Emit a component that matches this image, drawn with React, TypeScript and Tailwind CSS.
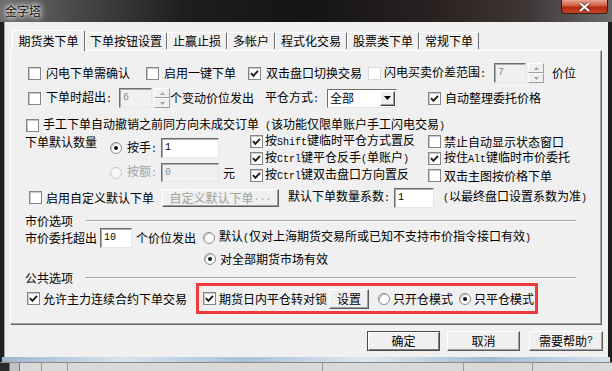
import React from 'react';

// half-width ascii, roughly the width of the SimSun bitmap glyphs (6px)
const A = ({ children }: { children: React.ReactNode }) => (
  <span className="[font-family:'Liberation_Mono',monospace] text-[10px]">{children}</span>
);

const Check = ({ on, faint }: { on?: boolean; faint?: boolean }) => (
  <span
    className={`w-[13px] h-[13px] shrink-0 bg-white flex items-center justify-center border ${
      faint ? 'border-[#dadada]' : 'border-[#858585] shadow-[inset_1px_1px_0_#c9c9c9]'
    }`}
  >
    {on && (
      <svg width="9" height="9" viewBox="0 0 9 9">
        <path d="M1 4.2 L3.4 6.8 L8 1.8" stroke="#1a1a1a" strokeWidth="1.9" fill="none" />
      </svg>
    )}
  </span>
);

const Radio = ({ on, disabled }: { on?: boolean; disabled?: boolean }) => (
  <span
    className={`w-[12px] h-[12px] shrink-0 rounded-full flex items-center justify-center border ${
      disabled ? 'border-[#c9c9c9] bg-[#f7f7f7]' : 'border-[#8a8a8a] bg-white shadow-[inset_1px_1px_1px_#c4c4c4]'
    }`}
  >
    {on && <span className="w-[4px] h-[4px] rounded-full bg-[#111]" />}
  </span>
);

const Box = ({ cls, value, disabled }: { cls: string; value: string; disabled?: boolean }) => (
  <div
    className={`${cls} shrink-0 flex items-center pl-[3px] border border-t-[#6d6d6d] border-l-[#6d6d6d] border-r-[#e6e6e6] border-b-[#e6e6e6] shadow-[inset_1px_1px_0_#ababab] ${
      disabled ? 'bg-[#f0f0f0] text-[#8c8c8c]' : 'bg-white text-black'
    }`}
  >
    <A>{value}</A>
  </div>
);

const Arrow = ({ down }: { down?: boolean }) => (
  <svg width="5" height="3" viewBox="0 0 5 3">
    <path d={down ? 'M0 0H5L2.5 3Z' : 'M2.5 0L5 3H0Z'} fill="#a3a3a3" />
  </svg>
);

const Spin = () => (
  <div className="w-[16px] h-[20px] shrink-0 flex flex-col">
    <div className="h-[10px] flex items-center justify-center bg-[#f0f0f0] border border-t-white border-l-white border-r-[#9d9d9d] border-b-[#9d9d9d]">
      <Arrow />
    </div>
    <div className="h-[10px] flex items-center justify-center bg-[#f0f0f0] border border-t-white border-l-white border-r-[#9d9d9d] border-b-[#9d9d9d]">
      <Arrow down />
    </div>
  </div>
);

const Btn = ({ cls, children, dflt, disabled }: { cls: string; children: React.ReactNode; dflt?: boolean; disabled?: boolean }) => (
  <div
    className={`${cls} shrink-0 flex items-center justify-center bg-[#f0f0f0] border ${
      dflt
        ? 'border-[#4a4a4a] shadow-[inset_1px_1px_0_#fff,inset_-1px_-1px_0_#7a7a7a,inset_0_0_0_1px_#6a6a6a]'
        : 'border-t-white border-l-white border-r-[#5a5a5a] border-b-[#5a5a5a] shadow-[inset_-1px_-1px_0_#a0a0a0]'
    } ${disabled ? 'text-[#a0a0a0]' : 'text-black'}`}
  >
    {children}
  </div>
);

const Group = ({ label }: { label: string }) => (
  <div className="flex items-center h-[12px] leading-[12px]">
    <span className="w-[61px]">{label}</span>
    <div className="w-[490px] h-[2px] border-t border-[#a0a0a0] border-b border-b-white" />
  </div>
);

const tabs = [
  { name: '期货类下单', w: 'w-[73px]' },
  { name: '下单按钮设置', w: 'w-[82px]' },
  { name: '止赢止损', w: 'w-[60px]' },
  { name: '多帐户', w: 'w-[48px]' },
  { name: '程式化交易', w: 'w-[72px]' },
  { name: '股票类下单', w: 'w-[72px]' },
  { name: '常规下单', w: 'w-[60px]' },
];

export default function App() {
  return (
    <div className="w-[612px] h-[371px] overflow-hidden flex flex-col bg-[#202020] [font-family:'Noto_Sans_CJK_SC',sans-serif] text-[12px] leading-[14px] text-black">
      {/* title bar */}
      <div className="h-[22px] shrink-0 flex justify-between bg-[linear-gradient(90deg,#6e6e6e_0%,#4a4a4a_12%,#1e1e1e_30%,#141414_50%,#2b2222_72%,#3f3636_86%,#6a6a6a_100%)]">
        <span className="pl-[5px] pt-[4px] text-[12px] leading-[13px] text-[#111] [text-shadow:0_0_3px_#fff,0_0_6px_#fff,0_0_9px_#ddd]">
          金字塔
        </span>
        <div className="mr-[4px] w-[47px] h-[14px] rounded-b-[4px] border border-t-0 border-[#3b1a12] bg-[linear-gradient(#e9a594,#cf5a3f_45%,#b0280f_55%,#c8452a)] flex items-center justify-center">
          <svg width="13" height="10" viewBox="0 0 13 10">
            <path d="M2 1 L11 9 M11 1 L2 9" stroke="#5a2a20" strokeWidth="3.6" />
            <path d="M2 1 L11 9 M11 1 L2 9" stroke="#fff" strokeWidth="2" />
          </svg>
        </div>
      </div>

      {/* client area */}
      <div className="h-[335px] shrink-0 mx-[4px] bg-[#f0f0f0] border-l border-[#9aa6b2] flex flex-col">
        <div className="h-[21px] mt-[7px] ml-[7px] flex items-end">
          {tabs.map((t, i) =>
            i === 0 ? (
              <div
                key={t.name}
                className={`${t.w} h-[21px] mb-[-1px] relative z-10 bg-[#f0f0f0] border-t border-l border-t-white border-l-white border-r border-r-[#696969] rounded-t-[2px] flex items-center justify-center`}
              >
                {t.name}
              </div>
            ) : (
              <div
                key={t.name}
                className={`${t.w} h-[17px] mb-[1px] bg-[#f0f0f0] border-t border-l border-t-white border-l-white border-r border-r-[#696969] rounded-t-[2px] flex items-center justify-center`}
              >
                {t.name}
              </div>
            )
          )}
        </div>

        {/* tab page */}
        <div className="ml-[5px] w-[592px] h-[275px] border border-t-white border-l-white border-r-[#696969] border-b-[#696969] shadow-[inset_-1px_-1px_0_#a0a0a0] pl-[14px] pt-[12px] flex flex-col">
          <div className="flex items-center h-[20px] pl-[3px]">
            <div className="w-[118px] flex items-center gap-[5px]"><Check /><span>闪电下单需确认</span></div>
            <div className="w-[102px] flex items-center gap-[5px]"><Check /><span>启用一键下单</span></div>
            <div className="w-[120px] flex items-center gap-[5px]"><Check on /><span>双击盘口切换交易</span></div>
            <div className="w-[126px] flex items-center gap-[3px]"><Check faint /><span>闪电买卖价差范围<A>:</A></span></div>
            <Box cls="w-[32px] h-[20px]" value="7" disabled />
            <div className="ml-[2px]"><Spin /></div>
            <span className="ml-[8px]">价位</span>
          </div>

          <div className="flex items-center h-[20px] pl-[3px] mt-[5px]">
            <div className="w-[91px] flex items-center gap-[5px]"><Check /><span>下单时超出<A>:</A></span></div>
            <Box cls="w-[33px] h-[20px]" value="6" disabled />
            <div className="ml-[2px]"><Spin /></div>
            <span className="w-[95px]">个变动价位发出</span>
            <span className="w-[62px]">平仓方式<A>:</A></span>
            <div className="w-[70px] h-[19px] bg-white flex items-center border border-t-[#6d6d6d] border-l-[#6d6d6d] border-r-[#e6e6e6] border-b-[#e6e6e6]">
              <span className="flex-1 pl-[2px]">全部</span>
              <div className="w-[15px] h-[15px] mr-[1px] bg-[#f0f0f0] flex items-center justify-center border border-t-white border-l-white border-r-[#404040] border-b-[#404040] shadow-[inset_-1px_-1px_0_#a0a0a0]">
                <svg width="7" height="4" viewBox="0 0 7 4"><path d="M0 0H7L3.5 4Z" fill="#000" /></svg>
              </div>
            </div>
            <div className="ml-[31px] flex items-center gap-[4px]"><Check on /><span>自动整理委托价格</span></div>
          </div>

          <div className="flex items-center h-[14px] pl-[1px] mt-[10px] gap-[4px]">
            <Check />
            <span>
              手工下单自动撤销之前同方向未成交订单<A> (</A>该功能仅限单账户手工闪电交易<A>)</A>
            </span>
          </div>

          <div className="flex h-[51px] mt-[1px]">
            <div className="w-[225px] flex">
              <span className="w-[85px] pt-[2px]">下单默认数量</span>
              <div className="flex flex-col pt-[5px] gap-[5px]">
                <div className="flex items-center h-[20px]">
                  <div className="w-[51px] flex items-center gap-[5px]"><Radio on /><span>按手<A>:</A></span></div>
                  <Box cls="w-[58px] h-[20px]" value="1" />
                </div>
                <div className="flex items-center h-[19px]">
                  <div className="w-[51px] flex items-center gap-[5px] text-[#a3a3a3]"><Radio disabled /><span>按额<A>:</A></span></div>
                  <Box cls="w-[58px] h-[19px]" value="0" disabled />
                  <span className="ml-[4px]">元</span>
                </div>
              </div>
            </div>
            <div className="w-[178px] flex flex-col">
              <div className="h-[17px] flex items-center gap-[2px]"><Check on /><span>按<A>Shift</A>键临时平仓方式置反</span></div>
              <div className="h-[17px] flex items-center gap-[2px]"><Check on /><span>按<A>Ctrl</A>键平仓反手<A>(</A>单账户<A>)</A></span></div>
              <div className="h-[17px] flex items-center gap-[2px]"><Check on /><span>按<A>Ctrl</A>键双击盘口方向置反</span></div>
            </div>
            <div className="flex flex-col">
              <div className="h-[17px] flex items-center gap-[3px]"><Check /><span>禁止自动显示状态窗口</span></div>
              <div className="h-[17px] flex items-center gap-[3px]"><Check on /><span>按住<A>Alt</A>键临时市价委托</span></div>
              <div className="h-[17px] flex items-center gap-[3px]"><Check /><span>双击主图按价格下单</span></div>
            </div>
          </div>

          <div className="flex items-center h-[19px] mt-[4px] pl-[4px]">
            <div className="w-[133px] flex items-center gap-[4px]"><Check /><span>启用自定义默认下单</span></div>
            <Btn cls="w-[117px] h-[18px]" disabled>自定义默认下单<A>...</A></Btn>
            <span className="ml-[9px] w-[106px]">默认下单数量系数<A>:</A></span>
            <Box cls="w-[40px] h-[20px]" value="1" />
            <span className="ml-[9px]"><A>(</A>以最终盘口设置系数为准<A>)</A></span>
          </div>

          <div className="mt-[8px]"><Group label="市价选项" /></div>

          <div className="flex items-center h-[19px] mt-[1px]">
            <span className="w-[75px]">市价委托超出</span>
            <Box cls="w-[32px] h-[20px]" value="10" />
            <span className="ml-[4px] w-[67px]">个价位发出</span>
            <div className="flex items-center gap-[4px]">
              <Radio />
              <span>默认<A>(</A>仅对上海期货交易所或已知不支持市价指令接口有效<A>)</A></span>
            </div>
          </div>

          <div className="flex items-center h-[16px] mt-[4px] ml-[179px] gap-[4px]">
            <Radio on />
            <span>对全部期货市场有效</span>
          </div>

          <div className="mt-[6px] h-[10px] flex items-center"><Group label="公共选项" /></div>

          <div className="flex items-center h-[31px] pl-[2px]">
            <div className="w-[169px] flex items-center gap-[3px]"><Check on /><span>允许主力连续合约下单交易</span></div>
            <div className="w-[342px] h-[31px] border-[3px] border-[#ef3b3b] flex items-center pl-[4px]">
              <Check on />
              <span className="ml-[3px]">期货日内平仓转对锁</span>
              <Btn cls="ml-[2px] w-[40px] h-[20px]">设置</Btn>
              <span className="ml-[9px]"><Radio /></span>
              <span className="ml-[3px]">只开仓模式</span>
              <span className="ml-[6px]"><Radio on /></span>
              <span className="ml-[3px]">只平仓模式</span>
            </div>
          </div>
        </div>

        <div className="flex justify-end mt-[6px] pr-[5px]">
          <Btn cls="w-[73px] h-[20px]" dflt>确定</Btn>
          <Btn cls="ml-[7px] w-[73px] h-[20px]">取消</Btn>
          <Btn cls="ml-[9px] w-[74px] h-[20px]">需要帮助<A>?</A></Btn>
        </div>
      </div>

      {/* lower frame */}
      <div className="h-[5px] shrink-0 mx-[2px] bg-[linear-gradient(90deg,#9fb6cc,#d4e3ef_20%,#a9c0d6_40%,#dce8f2_60%,#a4bbd0_80%,#d2e1ee)]" />
      <div className="flex-1 flex items-stretch bg-[#d9d9d9] border-t border-[#8a8a8a]">
        <div className="w-[9px] bg-[#2a2a2a]" />
        <div className="w-[11px] bg-[#c0c4c8] border-x border-[#777]" />
        <div className="w-[22px] border-r border-[#999]" />
        <div className="w-[26px] border-r border-[#999]" />
        <div className="w-[255px] border-r border-[#999]" />
        <div className="w-[141px] border-r border-[#999]" />
        <div className="w-[69px] border-r border-[#999]" />
      </div>
    </div>
  );
}
